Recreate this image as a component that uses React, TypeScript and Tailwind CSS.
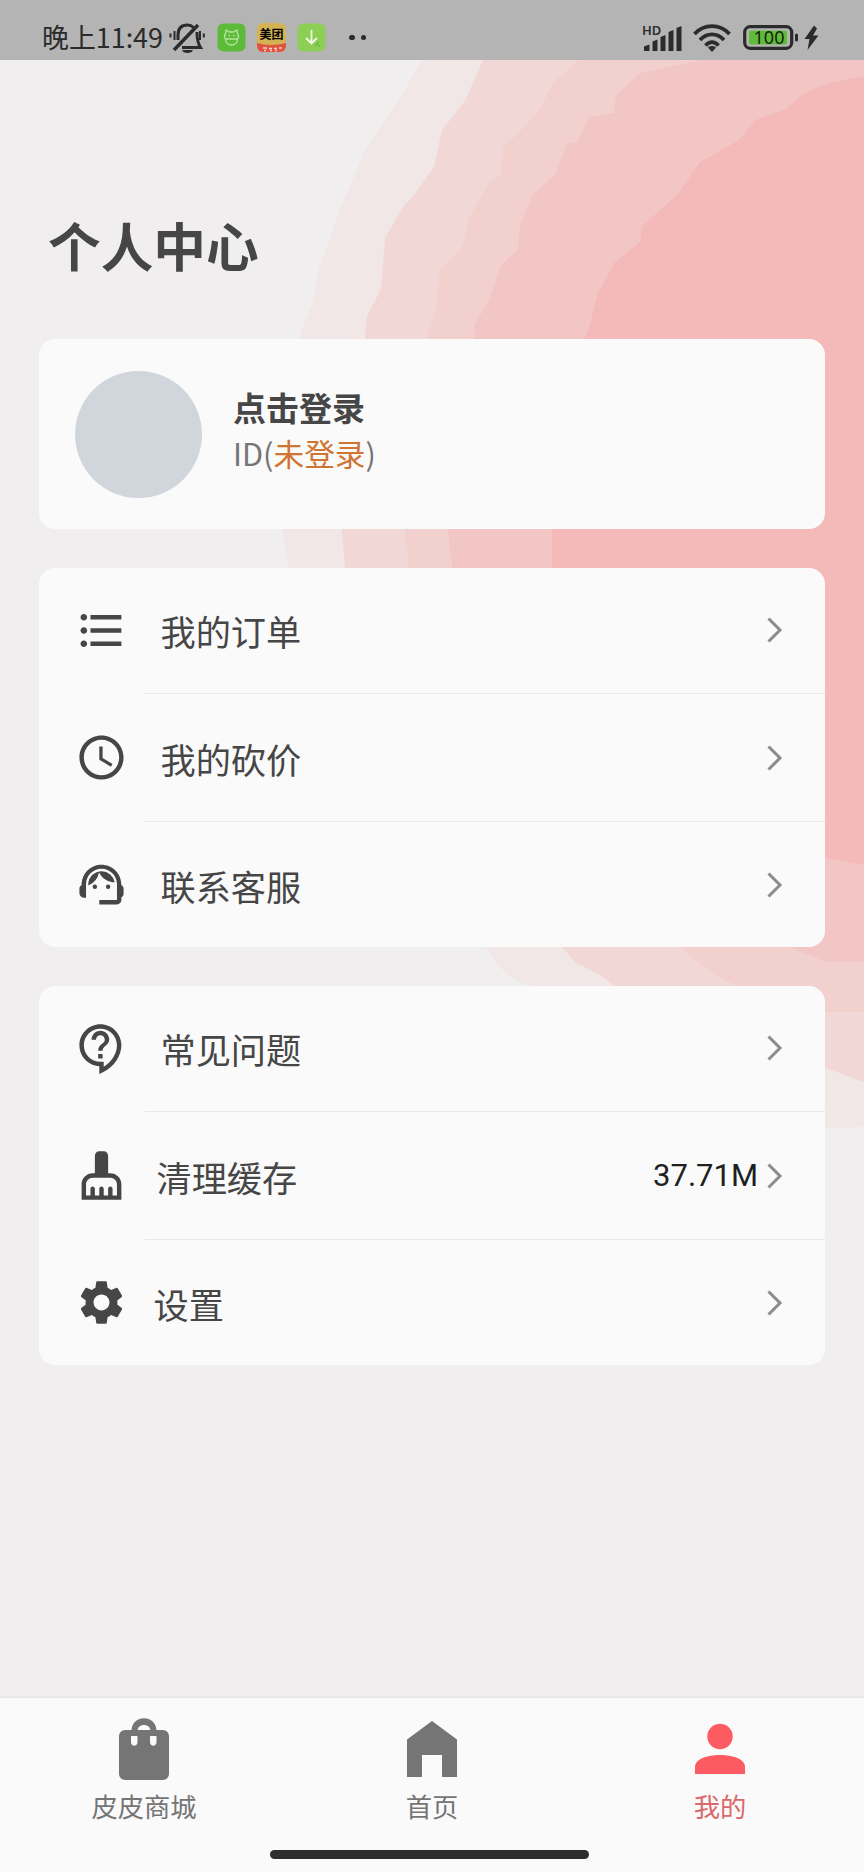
import type { ComponentType, ReactNode } from "react";
import {
  MdFormatListBulleted,
  MdOutlineCleaningServices,
  MdOutlineContactSupport,
  MdSchedule,
  MdSettings,
  MdSupportAgent,
} from "react-icons/md";
import clsx from "clsx";

interface MenuItem {
  label: string;
  icon: ComponentType<{ className?: string }>;
  labelClass?: string;
  value?: string;
}

// the outlined brush with its handle filled in
const BrushIcon = ({ className }: { className?: string }) => (
  <span className={clsx("relative", className)}>
    <MdOutlineCleaningServices className="size-full" />
    <i className="absolute left-[21px] top-[4px] h-[23px] w-[11px] bg-[#464646]" />
  </span>
);

const orderMenu: MenuItem[] = [
  { label: "我的订单", icon: MdFormatListBulleted, labelClass: "ml-[33px]" },
  { label: "我的砍价", icon: MdSchedule, labelClass: "ml-[33px]" },
  { label: "联系客服", icon: MdSupportAgent, labelClass: "ml-[33px]" },
];

const helpMenu: MenuItem[] = [
  { label: "常见问题", icon: MdOutlineContactSupport, labelClass: "ml-[33px]" },
  { label: "清理缓存", icon: BrushIcon, labelClass: "ml-[29px]", value: "37.71M" },
  { label: "设置", icon: MdSettings, labelClass: "ml-[26px]" },
];

const Backdrop = () => (
  <svg className="absolute inset-0 h-full w-full" viewBox="0 0 864 1872">
    <path
      fill="#f0e7e6"
      d="M864 60H422L403 93 385 120 364 152 353 179 341 207 330 238 319 269 312 305 301 332 295 363 290 400 283 530 288 568 320 720 400 860 486 947 497 965 515 980 540 990 680 1080 826 1128 864 1127z"
    />
    <path
      fill="#f2d7d7"
      d="M864 60H483L465 101 442 130 434 167 414 195 403 207 385 238 381 289 367 316 364 348 356 387 342 530 345 568 380 720 460 860 562 947 575 962 600 975 620 990 740 1050 826 1068 864 1082z"
    />
    <path
      fill="#f1d0ce"
      d="M864 60H579L553 83 540 109 518 134 503 146 501 175 489 183 469 218 463 246 440 269 436 308 426 340 411 360 409 387 398 470 409 568 450 720 540 860 679 947 715 975 745 990 826 1012H864z"
    />
    <path
      fill="#f3c6c6"
      d="M864 60H700L641 73 616 95 614 113 589 117 577 142 567 144 555 175 532 195 520 226 518 250 501 265 489 300 475 324 473 359 463 383 448 530 452 568 500 720 620 870 790 947 826 962H864z"
    />
    <path
      fill="#f4baba"
      d="M864 76 829 83 804 93 786 109 755 120 739 140 700 162 677 195 642 226 640 242 614 263 598 293 589 328 575 359 565 387 552 530V568L600 700 700 800 826 858 864 865z"
    />
  </svg>
);

const StatusBar = () => (
  <header className="relative flex h-[60px] shrink-0 items-center bg-[#b4b4b4] pl-[42px] pt-[15px] text-[#2b2b2b]">
    <span className="w-[127px] whitespace-nowrap text-[26.900px] leading-none">晚上11:49</span>
    {/* muted bell */}
    <svg className="h-[32px] w-[36px] shrink-0" viewBox="0 0 36 32" fill="none" stroke="currentColor" strokeWidth="3">
      <path d="M9 18V13C9 6 13 3 18.500 3c2.500 0 4.500 1 6 2.500M28 10c0 7 .5 11 3.500 15.500H13" />
      <path d="M5 28 29 3" strokeWidth="3.400" />
      <path d="M13 28h11c-1 4-10 4-11 0z" fill="currentColor" stroke="none" />
      <path d="M5.500 9v9M1.500 11.500v4M31 9v9M34.800 11.500v4" strokeWidth="2" />
    </svg>
    <svg className="ml-[12px] size-[29px] shrink-0" viewBox="0 0 29 29">
      <rect x=".5" y=".5" width="28" height="28" rx="6" fill="#5dbb3a" />
      <g fill="none" stroke="#b9e3a3" strokeWidth="1.300">
        <path d="M8.500 11 9 7l3.500 2h4L20 7l.5 4c1.500 2 1 4 0 5h-12c-1-1-1.500-3 0-5zM8.500 16c0 8 12 8 12 0" />
        <path d="M11.500 12.500h1.500M16 12.500h1.500" />
      </g>
    </svg>
    <div className="ml-[11px] flex size-[29px] shrink-0 flex-col overflow-hidden rounded-[6px] bg-[#d3b354]">
      <div className="mt-[3px] h-[17px] text-center text-[12px] font-bold leading-[16px] text-black">美团</div>
      <svg className="h-[9px] w-[29px]" viewBox="0 0 29 9">
        <path d="M0 0Q14 4 29 0V9H0z" fill="#e0533f" />
        <path d="M6 5h4M12 5.500h3M17 5.500h3M22 5h3M7 7.500h2M13 7.500h2M18 7.500h2" stroke="#f7cfc4" strokeWidth="1.500" />
      </svg>
    </div>
    <svg className="ml-[11px] size-[29px] shrink-0" viewBox="0 0 29 29">
      <rect x=".5" y=".5" width="28" height="28" rx="6" fill="#8dce55" />
      <path d="M14.500 7v13M9 15l5.500 5.500L20 15" fill="none" stroke="#f1f8e6" strokeWidth="1.800" />
      <path d="M18 23l4-4M21 23h2" stroke="#62b83a" strokeWidth="1.500" />
    </svg>
    <div className="ml-[23px] flex gap-[6px]">
      <i className="size-[5.500px] rounded-full bg-[#2b2b2b]" />
      <i className="size-[5.500px] rounded-full bg-[#2b2b2b]" />
    </div>

    <div className="relative ml-auto h-[28px] w-[41px] shrink-0">
      <svg className="size-full" viewBox="0 0 41 28" fill="currentColor">
        <path d="M2 22.500 7.500 20.500V27H2zM10.500 17.500l5-2V27h-5zM18.500 13l5-2V27h-5zM26.500 8l5-2V27h-5zM34.500 4l5-2V27h-5z" />
      </svg>
      <span className="absolute left-0 top-0 font-['Noto_Sans'] text-[13px] font-semibold leading-[13px]">HD</span>
    </div>
    <svg className="ml-[10px] h-[28px] w-[38px] shrink-0" viewBox="0 0 38 28" fill="none" stroke="currentColor" strokeWidth="3.800">
      <path d="M1.500 10C11 -.5 27 -.5 36.500 10M7 16c7-7.500 17-7.500 24 0M12.500 21.500c4-4.500 9-4.500 13 0" />
      <path d="m19 28-4-4.500c2-2 6-2 8 0z" fill="currentColor" stroke="none" />
    </svg>
    <svg className="ml-[12px] mr-[45px] h-[28px] w-[76px] shrink-0" viewBox="0 0 76 28">
      <rect x="1.700" y="2.700" width="47" height="21.600" rx="5.500" fill="none" stroke="#2b2b2b" strokeWidth="3.200" />
      <rect x="6" y="6.500" width="38" height="14" rx="2" fill="#5fbb38" />
      <text x="26" y="20" textAnchor="middle" fontSize="18" fill="#16240f" fontFamily="Noto Sans">100</text>
      <rect x="52" y="9.500" width="3" height="8" rx="1.500" fill="#2b2b2b" />
      <path d="M71 1.500 61.500 15h5l-2 11L75.500 11.500H70l4-7z" fill="#2b2b2b" />
    </svg>
  </header>
);

const Chevron = () => (
  <svg className="h-[26px] w-[16px]" viewBox="0 0 16 26" fill="none" stroke="#8c8c8c" strokeWidth="3">
    <path d="M1.500 1.500 13 13 1.500 24.500" />
  </svg>
);

const MenuCard = ({ items }: { items: MenuItem[] }) => (
  <section className="flex h-[379px] flex-col rounded-[16px] bg-[#fafafa]">
    {items.map(({ label, icon: Icon, labelClass, value }, index) => (
      <div key={label} className="flex h-[127.700px] shrink-0 flex-col last:h-[123px]">
        <div className="flex h-[124px] items-center pl-[35.500px] pr-[42px] text-[#464646]">
          <Icon className="size-[53px] shrink-0" />
          <span className={clsx("mt-[2px] text-[35.200px] leading-none", labelClass)}>{label}</span>
          <div className="ml-auto flex items-center gap-[9px]">
            {value && <span className="font-['Roboto'] text-[31px] leading-none text-[#202020]">{value}</span>}
            <Chevron />
          </div>
        </div>
        {index < items.length - 1 && <div className="ml-[106px] mt-[1px] h-[1px] bg-[#e9e9e9]" />}
      </div>
    ))}
  </section>
);

interface TabProps {
  label: string;
  active?: boolean;
  children: ReactNode;
}

const Tab = ({ label, active, children }: TabProps) => (
  <div className={clsx("flex flex-1 flex-col items-center", active ? "text-[#fc5b62]" : "text-[#757575]")}>
    <svg className="mt-[18px] h-[66px] w-[54px]" viewBox="0 0 54 66" fill="currentColor">
      {children}
    </svg>
    <span className={clsx("mt-[11px] text-[26.300px] leading-none", active && "text-[#d9696b]")}>{label}</span>
  </div>
);

const TabBar = () => (
  <nav className="relative flex h-[176px] shrink-0 flex-col border-t-2 border-[#e8e8e8] bg-[#fafafa]">
    <div className="flex">
      <Tab label="皮皮商城">
        <path d="M14.500 15C14.500 -2 39.500 -2 39.500 15h-6C33.500 7 20.500 7 20.500 15z" />
        <path
          fillRule="evenodd"
          d="M8 14h38a6 6 0 0 1 6 6v38a6 6 0 0 1-6 6H8a6 6 0 0 1-6-6V20a6 6 0 0 1 6-6zM14 20v6c0 5 6.500 5 6.500 0v-6zM33 20v6c0 5 6.500 5 6.500 0v-6z"
        />
      </Tab>
      <Tab label="首页">
        <path d="M27 5 52 23.500V61H37V39H17V61H2V23.500z" />
      </Tab>
      <Tab label="我的" active>
        <circle cx="27" cy="20.500" r="12.700" />
        <path d="M2 58V51C2 43 14 39 27 39s25 4 25 12v7z" />
      </Tab>
    </div>
    <div className="mb-[13px] ml-[270px] mt-auto h-[9px] w-[319px] rounded-full bg-[#2e2e2e]" />
  </nav>
);

export default function App() {
  return (
    <div className="relative flex h-[1872px] w-[864px] flex-col overflow-hidden bg-[#f0eeef] font-['Noto_Sans_CJK_SC',sans-serif]">
      <Backdrop />
      <StatusBar />
      <main className="relative flex flex-1 flex-col px-[39px]">
        <h1 className="ml-[9px] mt-[158px] text-[52.700px] font-bold leading-[53px] text-[#464646]">个人中心</h1>
        <section className="mt-[68px] flex h-[190px] items-center rounded-[16px] bg-[#fafafa] pl-[36px]">
          <div className="size-[127px] rounded-full bg-[#d1d6dc]" />
          <div className="mb-[9px] ml-[31px] flex flex-col">
            <span className="text-[33px] font-bold leading-[46px] text-[#464646]">点击登录</span>
            <span className="text-[30.700px] leading-[46px] text-[#757575]">
              ID(<span className="text-[#cf7431]">未登录</span>)
            </span>
          </div>
        </section>
        <div className="mt-[39px] flex flex-col gap-[39px]">
          <MenuCard items={orderMenu} />
          <MenuCard items={helpMenu} />
        </div>
      </main>
      <TabBar />
    </div>
  );
}
